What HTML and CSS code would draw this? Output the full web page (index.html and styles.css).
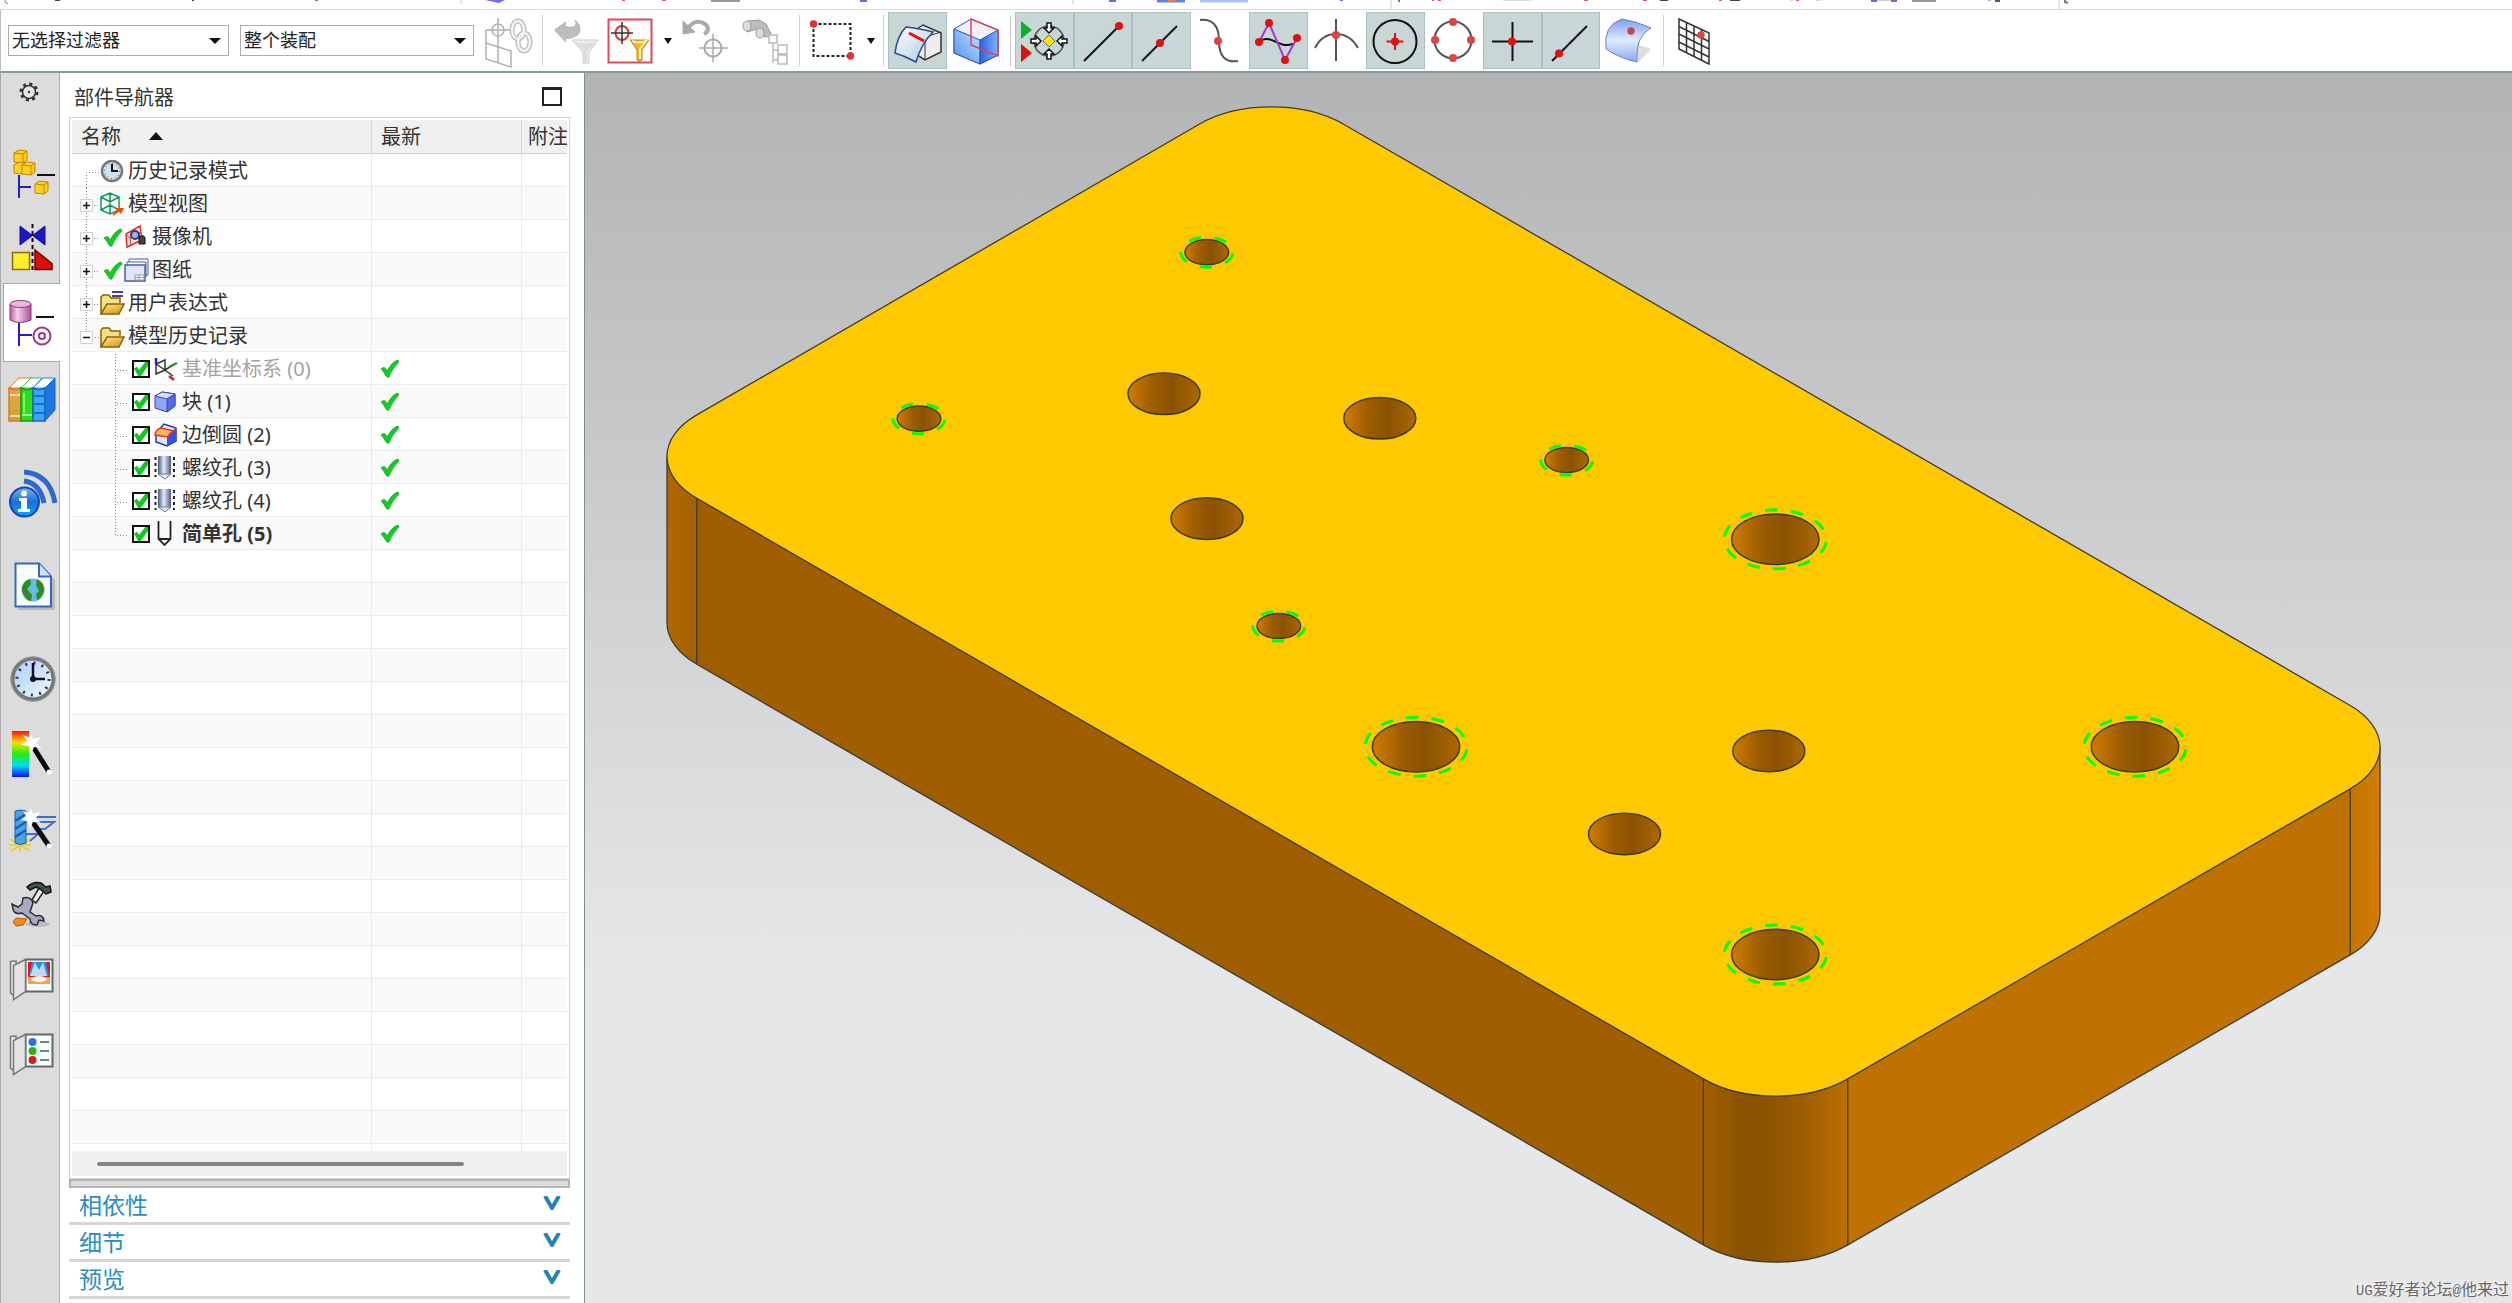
FILE: index.html
```html
<!DOCTYPE html>
<html lang="zh-CN">
<head>
<meta charset="utf-8">
<title>部件导航器</title>
<link rel="stylesheet" href="styles.css">
</head>
<body>
<div class="app">
  <div class="ribbon-edge" aria-hidden="true">
    <svg width="2512" height="9" viewBox="0 0 2512 9">
      <path d="M5 0v2l3 2" stroke="#888" fill="none"/>
      <path d="M55 0h5M192 0h2M1730 0h10M1660 0h8" stroke="#444" stroke-width="2"/>
      <path d="M315 0h3M1109 1h7M1340 0h3M860 1h7" stroke="#5b74d8" stroke-width="2"/>
      <path d="M485 0h20l-6 3z" fill="#6d6df0"/>
      <path d="M622 0h3M662 0h4M1432 0h2M1438 0h3M1584 0h4M1643 0h4M1719 0h3M1796 0h3" stroke="#e0566a" stroke-width="2"/>
      <path d="M711 1h29M1912 1h24" stroke="#999" stroke-width="2"/>
      <path d="M1157 1h28" stroke="#5f83d6" stroke-width="3"/><path d="M1168 0h7" stroke="#f08040" stroke-width="3"/>
      <path d="M1200 1h48" stroke="#a9c4f5" stroke-width="3"/>
      <path d="M1503 0h28M1790 0h3M1816 0h5" stroke="#ddd" stroke-width="2"/>
      <path d="M1871 1h6M1891 1h6" stroke="#6a6ac8" stroke-width="2"/><path d="M1877 0h14" stroke="#ccd" stroke-width="2"/>
      <path d="M1988 0h3" stroke="#d08be8" stroke-width="2"/><path d="M1995 1h5" stroke="#555" stroke-width="2"/>
      <path d="M1399 0v2M2065 0v2l3 1" stroke="#777" fill="none" stroke-width="2"/>
      <path d="M461 0v4M1073 0v4M1391 0v9M2059 0v9" stroke="#ccc"/>
    </svg>
  </div>

  <header class="toolbar">
    <div class="filters">
      <label class="combo combo-type"><select aria-label="类型过滤器"><option>无选择过滤器</option></select></label>
      <label class="combo combo-scope"><select aria-label="选择范围"><option>整个装配</option></select></label>
    </div>
    <button class="tool" aria-label="部件间链接"><svg viewBox="0 0 48 48" fill="none" stroke="#b0b0b0" stroke-width="1.5"><path d="M1 13v29l25 8V34L1 26M13 1v44M1 13h24"/><circle cx="13" cy="13" r="6"/><g stroke="#bbb" stroke-width="5"><ellipse cx="33" cy="13" rx="6" ry="9"/><ellipse cx="39" cy="25" rx="6" ry="9"/></g><g stroke="#f4f4f4" stroke-width="2.5"><ellipse cx="33" cy="13" rx="6" ry="9"/><ellipse cx="39" cy="25" rx="6" ry="9"/></g></svg></button>
    <span class="sep"></span>
    <div class="select-tools">
      <button class="tool" aria-label="重置过滤器"><svg viewBox="0 0 48 48"><path d="M2 13 14 4v5c8 2 12 0 8-7 9 5 9 17-2 19-2 1-4 1-6 1v4z" fill="#bcbcbc"/><path d="M20 23h26L37 35v11q-4 2-6 0V35z" fill="#eee" stroke="#ccc"/><path d="M22 25q11 3 22 0l-9 9v11l-3 1V34z" fill="#ddd"/></svg></button>
      <button class="tool" aria-label="常规选择过滤器"><svg viewBox="0 0 48 48"><path d="M2.500 2.500h43v43h-43z" fill="#fff" stroke="#d94b56" stroke-width="2"/><ellipse cx="16" cy="16" rx="6.500" ry="7" fill="none" stroke="#d33" stroke-width="2"/><path d="M16 5v22M5 16h22" stroke="#333" stroke-width="1.500"/><path d="M24 23h19L36 33v10q-3 2-5 0V33z" fill="#edb52c" stroke="#b98a20"/><path d="M26 24q7 3 14 0l-6 8v10" fill="none" stroke="#fff0a0" stroke-width="2"/></svg></button>
      <button class="drop" aria-label="更多过滤器"><svg viewBox="0 0 16 16"><path d="M4 5h8l-4 6z" fill="#111"/></svg></button>
      <button class="tool" aria-label="恢复选择"><svg viewBox="0 0 48 48" fill="none" stroke="#aaa"><path d="M6 11q8-10 17-4c5 4 3 8-1 10" stroke-width="4"/><path d="M1 4v13l12-2z" fill="#aaa"/><circle cx="31" cy="31" r="8.500" stroke-width="2"/><path d="M31 17v28M17 31h29" stroke-width="1.500"/></svg></button>
      <button class="tool tool-wide" aria-label="在导航器中查找"><svg viewBox="0 0 48 48"><g fill="#bdbdbd" stroke="#999"><path d="M6 4 17 3l7 4 6 12-8 1-7-8-10 3z"/><ellipse cx="5" cy="9" rx="4" ry="5" fill="#ddd"/><ellipse cx="18" cy="16" rx="4" ry="5" fill="#ddd"/></g><g fill="#fff" stroke="#bbb" stroke-width="1.500"><path d="M31 26v20M31 33h6M31 43h6" fill="none"/><path d="M27 18h8v8h-8zM36 28h9v9h-9zM36 38h9v9h-9z"/></g></svg></button>
    </div>
    <span class="sep sep-tight"></span>
    <button class="tool tool-wide" aria-label="矩形选择"><svg viewBox="0 0 48 48"><path d="M3.500 7h37v32h-37z" fill="none" stroke="#222" stroke-width="2" stroke-dasharray="3 2"/><circle cx="3.500" cy="7" r="3.700" fill="#d33"/><circle cx="40.500" cy="39" r="3.700" fill="#d33"/></svg></button>
    <button class="drop" aria-label="选择方式"><svg viewBox="0 0 16 16"><path d="M4 5h8l-4 6z" fill="#111"/></svg></button>
    <span class="sep sep-tight"></span>
    <button class="tool tool-wide on" aria-label="高亮显示"><svg viewBox="0 0 48 48"><path d="M17 16 29 8l18 8v19L31 43 20 36z" fill="#eee" stroke="#333" stroke-width="1.500"/><path d="m31 20 16-5M31 20v22" stroke="#333"/><path d="M12 10q16 2 27 5-12 12-17 30Q11 39 1 36 3 19 12 10z" fill="url(#sheet)" stroke="#2b45a0" stroke-width="1.500"/><path d="m15 16 15 8" stroke="#f00b0b" stroke-width="3"/></svg></button>
    <button class="tool tool-wide" aria-label="着色显示"><svg viewBox="0 0 48 48"><path d="M1 12 18 2l27 11v25L27 47 1 36z" fill="#f1f1f3" stroke="#3350c0"/><path d="m1 12 26 11v24L1 36z" fill="url(#blueFace)" stroke="#3350c0"/><path d="m27 23 18-10v25l-18 9z" fill="url(#blueSide)" stroke="#3350c0"/><path d="M18 2v26l27 11V13z" fill="none" stroke="#e04060" stroke-width="1.500"/></svg></button>
    <span class="sep sep-tight"></span>
    <div class="snaps">
      <button class="tool on" aria-label="启用捕捉点"><svg viewBox="0 0 48 48"><path d="M1 4v18l11-9z" fill="#0db02c"/><path d="M1 27v18l11-9z" fill="#d11"/><circle cx="29" cy="24" r="15" fill="none" stroke="#555" stroke-width="1.500"/><path d="m29 18 6 6-6 6-6-6z" fill="#ffe900" stroke="#666"/><g fill="#fff" stroke="#111" stroke-width="1.500"><path id="arr" d="M27 6h4v5h3l-5 5-5-5h3z"/><use href="#arr" transform="rotate(90 29 24)"/><use href="#arr" transform="rotate(180 29 24)"/><use href="#arr" transform="rotate(270 29 24)"/></g></svg></button>
      <button class="tool on" aria-label="端点"><svg viewBox="0 0 48 48"><path d="M5 44 40 9" stroke="#111" stroke-width="2"/><circle cx="40" cy="9" r="4" fill="#d11"/></svg></button>
      <button class="tool on" aria-label="中点"><svg viewBox="0 0 48 48"><path d="M5 44 40 9" stroke="#111" stroke-width="2"/><circle cx="23" cy="26" r="4" fill="#d11"/></svg></button>
      <button class="tool" aria-label="控制点"><svg viewBox="0 0 48 48"><path d="M4 3q19-2 19 21t19 20" fill="none" stroke="#555" stroke-width="2"/><circle cx="22" cy="24" r="4" fill="#d44"/></svg></button>
      <button class="tool on" aria-label="定义点"><svg viewBox="0 0 48 48" fill="none"><path d="M5 24c15-7 18 8 34 3" stroke="#111" stroke-width="2"/><path d="M5 25 15 6l16 37 12-22" stroke="#a535d8" stroke-width="2"/><g fill="#d11"><circle cx="5" cy="25" r="4"/><circle cx="15" cy="6" r="4"/><circle cx="31" cy="43" r="4"/><circle cx="43" cy="21" r="4"/></g></svg></button>
      <button class="tool" aria-label="交点"><svg viewBox="0 0 48 48"><path d="M2 31q7-14 21-14t22 14M23 2v42" fill="none" stroke="#555" stroke-width="2"/><circle cx="23" cy="18" r="4" fill="#d44"/></svg></button>
      <button class="tool on" aria-label="圆弧中心"><svg viewBox="0 0 48 48"><circle cx="24" cy="24.500" r="21.500" fill="none" stroke="#111" stroke-width="2"/><path d="M24 16v17M15.500 24.500h17" stroke="#d11" stroke-width="2"/><circle cx="24" cy="24.500" r="4" fill="#d11"/></svg></button>
      <button class="tool" aria-label="象限点"><svg viewBox="0 0 48 48"><circle cx="23" cy="23" r="18.500" fill="none" stroke="#555" stroke-width="2"/><g fill="#d44"><circle cx="23" cy="5" r="4"/><circle cx="5" cy="23" r="4"/><circle cx="41" cy="23" r="4"/><circle cx="23" cy="41" r="4"/></g></svg></button>
      <button class="tool on" aria-label="现有点"><svg viewBox="0 0 48 48"><path d="M4 24.500h41M24.500 5v39" stroke="#111" stroke-width="2"/><circle cx="24" cy="24.500" r="4" fill="#d11"/></svg></button>
      <button class="tool on" aria-label="曲线上的点"><svg viewBox="0 0 48 48"><path d="M5 44 40 9" stroke="#111" stroke-width="2"/><circle cx="12" cy="36.500" r="4" fill="#d11"/></svg></button>
    </div>
    <button class="tool tool-wide" aria-label="面上的点"><svg viewBox="0 0 48 48"><path d="m29 27 16 5-13 14z" fill="#ddd"/><path d="M16 2q14 2 29 9-16 8-14 34Q13 41 0 32-3 8 16 2z" fill="url(#surf)" stroke="#6884c8"/><circle cx="25" cy="14" r="3.700" fill="#c44"/></svg></button>
    <span class="sep sep-tight"></span>
    <button class="tool tool-wide" aria-label="网格点"><svg viewBox="0 0 48 48"><path d="M5 2v30l30 15V16zM5 9.500l30 15M5 17l30 15M5 25l30 15M12.500 5v31M20 9v31M27.500 12v31" fill="none" stroke="#333" stroke-width="1.500"/><circle cx="27" cy="18" r="3.700" fill="#d44"/></svg></button>
  </header>

  <div class="workspace">
    <nav class="rail" aria-label="资源条">
      <button class="rail-gear" aria-label="资源条选项"><svg width="20" height="20" viewBox="0 0 20 20"><circle cx="10" cy="10" r="8" fill="none" stroke="#333" stroke-width="3" stroke-dasharray="3 3.280"/><circle cx="10" cy="10" r="6.500" fill="#e6e6e6" stroke="#333" stroke-width="1.500"/><circle cx="10" cy="10" r="1.200" fill="#333"/></svg></button>
      <button class="rail-btn" aria-label="装配导航器"><svg viewBox="0 0 48 48"><g fill="#ffcf24" stroke="#c28500"><path d="m6 6 5-3 8 1v9l-4 3-9-1z"/><path d="m6 18 5-3 7 1v9l-4 2-8-1z"/><path d="m14 18 5-3 8 1v9l-4 3-9-1z"/><path d="m6 6 9 1 4-3M15 7v9m-1 2 9 1 4-3m-4 3v9" fill="none"/></g><path d="m27 37 4-3 9 1v9l-4 3-9-1z" fill="#ffcf24" stroke="#c28500"/><path d="m27 37 9 1 4-3m-4 3v9" fill="none" stroke="#c28500"/><path d="M29 28h18" stroke="#111" stroke-width="2"/><path d="M11 28v23M11 40h12" stroke="#2222c0" stroke-width="2"/></svg></button>
      <button class="rail-btn" aria-label="约束导航器"><svg viewBox="0 0 48 48"><path d="M12 4v19l25-19v19z" fill="#1b16c8" stroke="#1010a0"/><path d="M24.500 2v47" stroke="#111" stroke-width="2" stroke-dasharray="4 3"/><path d="M4.500 30.500h17v17h-17z" fill="#ffec2a" stroke="#8a6d00" stroke-width="1.500"/><path d="M27 28v19.500h17v-6z" fill="#d91208" stroke="#700" stroke-width="1.500"/></svg></button>
      <button class="rail-btn rail-on" aria-label="部件导航器"><svg viewBox="0 0 48 48"><path d="M2 5v16q10 5 21 0V5" fill="url(#pink)" stroke="#8a3a78"/><ellipse cx="12.500" cy="5" rx="10.500" ry="3.500" fill="#e9b9dd" stroke="#8a3a78"/><path d="M28 18h18" stroke="#111" stroke-width="2"/><path d="M11 24v23M11 36h13" stroke="#2222c0" stroke-width="2"/><ellipse cx="34" cy="37" rx="8.500" ry="8.500" fill="#fff" stroke="#9b3a86" stroke-width="2"/><circle cx="34" cy="37" r="3" fill="#fff" stroke="#9b3a86" stroke-width="2"/></svg></button>
      <button class="rail-btn" aria-label="重用库"><svg viewBox="0 0 48 48"><path d="M1 12 11 2h13L13 12z" fill="#fff" stroke="#e07820"/><path d="M13 12 23 2h11L25 12z" fill="#fff" stroke="#4b4"/><path d="M25 12 35 2h12L37 12z" fill="#fff" stroke="#28d"/><path d="M1 12q6 3 12 0v33H1z" fill="url(#bookO)" stroke="#e07820" stroke-width="1.500"/><path d="M13 12q6 3 12 0v33H13z" fill="#32dc1c" stroke="#189a18" stroke-width="1.500"/><path d="M25 12q6 3 12 0v33H25z" fill="#3fa5f5" stroke="#1565c8" stroke-width="1.500"/><path d="M37 12 47 2v32L37 45z" fill="#1f78e0" stroke="#1565c8"/><path d="M16 17v20" stroke="#7dff60" stroke-width="2"/><path d="M2 19h10M2 40h10" stroke="#fdb" stroke-width="2"/><path d="M14 39h10" stroke="#9f9" stroke-width="2"/><path d="M26 20h10M26 28h10M26 37h10" stroke="#1560c0" stroke-width="1.500"/></svg></button>
      <button class="rail-btn rail-gap" aria-label="HD3D 工具"><svg viewBox="0 0 48 48"><path d="M16 12q16 2 20 22M16 3q26 2 31 31" fill="none" stroke="#3068d0" stroke-width="5"/><circle cx="16.500" cy="33" r="14.500" fill="url(#info)" stroke="#1547a8" stroke-width="2"/><circle cx="16" cy="24.500" r="3" fill="#fff"/><path d="M11 29h8v11h3v3H10v-3h3v-8h-2z" fill="#fff"/></svg></button>
      <button class="rail-btn rail-gap" aria-label="Web 浏览器"><svg viewBox="0 0 48 48"><path d="M10 4h24l13 14v30H10z" fill="#999" opacity=".5"/><path d="M7.500 1.500H31l12 13v30H7.500z" fill="#f8fdff" stroke="#3367c8" stroke-width="2"/><path d="M31 1.500v13h12" fill="#cfe4fb" stroke="#3367c8" stroke-width="2"/><circle cx="25" cy="28" r="11.500" fill="#67b8e8"/><path d="M22 17q-8 2-8 12 4 10 9 10l1-6-5-6 4-5zM29 17q8 4 7 12-3 8-7 9l-1-6 3-3-3-6z" fill="#2f8a1c"/></svg></button>
      <button class="rail-btn rail-gap" aria-label="历史记录"><svg viewBox="0 0 48 48"><circle cx="25" cy="24" r="20.500" fill="url(#dial)" stroke="#777" stroke-width="4"/><circle cx="25" cy="24" r="22" fill="none" stroke="#999"/><circle cx="25" cy="24" r="16" fill="none" stroke="#334" stroke-width="3" stroke-dasharray="2 6.380"/><path d="M25 8v16h12" fill="none" stroke="#112" stroke-width="2.500"/><circle cx="25" cy="24" r="3" fill="#112"/></svg></button>
      <button class="rail-btn" aria-label="可视化"><svg viewBox="0 0 48 48"><path d="M4 1h17v46H4z" fill="url(#rainbow)"/><path d="m24 15 17 27" stroke="#0a0a0a" stroke-width="5"/><circle cx="41" cy="42" r="2.500" fill="#fff"/><path d="m23 2 2 7 8-2-5 6 6 5-8-1-3 7-2-8-8-1 6-4-4-6 7 3z" fill="#fff"/></svg></button>
      <button class="rail-btn" aria-label="加工向导"><svg viewBox="0 0 48 48"><path d="M26 12h22M26 17h20l-9 7H26M10 29h20l-8 7" stroke="#3a70c8" stroke-width="2" fill="none"/><path d="M2 34 22 46M22 34 3 46M12 33v14M1 40h22" stroke="#f2cf2a" stroke-width="2"/><path d="M7 6q5-2 11 0v32q-6 3-11 0z" fill="#49a4ec" stroke="#1b5fae"/><path d="m7 16 11-7M7 24l11-7M7 32l11-7" stroke="#1b5fae" stroke-width="2.500"/><path d="m24 16 17 25" stroke="#0a0a0a" stroke-width="5"/><circle cx="41" cy="41" r="2.500" fill="#fff"/><path d="m23 3 2 6 7-2-4 6 5 5-8-1-3 6-2-7-7-1 5-4-3-5 6 2z" fill="#fff"/></svg></button>
      <button class="rail-btn" aria-label="工具"><svg viewBox="0 0 48 48"><ellipse cx="30" cy="44" rx="12" ry="3" fill="#bbb"/><path d="m8 38-3 4 3 4 7-1 4-6z" fill="#f58a1c" stroke="#b85a00"/><path d="m24 20 7-12 5 3-8 12z" fill="#eee" stroke="#222" stroke-width="1.500"/><path d="M19 7q6-6 14-4l5 4 4-1 1 6-5 2-6-5-4-2-6 3z" fill="#3b5548" stroke="#111" stroke-width="1.500"/><path d="M15 18q8-2 10 5l-3 9 6 4q7-2 8 5l-5-1-2 5q-7 0-7-6l-8-6q-8 2-9-4l-1-5 6 3 4-3z" fill="#a9a9c2" stroke="#2b2b3a" stroke-width="1.500"/></svg></button>
      <button class="rail-btn" aria-label="系统场景"><svg viewBox="0 0 48 48"><g id="doors"><path d="M17.500 4.500h27v32h-27z" fill="#f2ffff" stroke="#666" stroke-width="2"/><path d="M2.500 6.500 8 6v36l-5.500-4z" fill="#eee" stroke="#777" stroke-width="1.500"/><path d="m17.500 4.500-12 6v34l12-8z" fill="#e4e4e4" stroke="#777" stroke-width="1.500"/></g><path d="M20 7h22v16H20z" fill="#e01515"/><path d="M24 7h14l3 14H21z" fill="#2b8ae8"/><path d="m27 7 4 8 4-8 4 14H22z" fill="#b9dcf8"/><path d="M20 22h22v7H20z" fill="#f0a44c"/><ellipse cx="31" cy="24" rx="8" ry="3" fill="#fff3e0"/></svg></button>
      <button class="rail-btn" aria-label="角色"><svg viewBox="0 0 48 48"><use href="#doors"/><circle cx="24.500" cy="12" r="4" fill="#2b70e4"/><circle cx="24.500" cy="21" r="4" fill="#2bb51c"/><circle cx="24.500" cy="30" r="4" fill="#d81c1c"/><path d="M32 12h9M32 21h9M32 30h9" stroke="#555" stroke-width="1.500"/></svg></button>
    </nav>

    <aside class="navigator">
      <div class="nav-title">
        <h1>部件导航器</h1>
        <button class="maximize" aria-label="最大化"></button>
      </div>
      <div class="tree-box">
        <div class="tree-view">
          <table class="tree">
            <thead><tr><th class="col-name">名称<span class="sort"></span></th><th class="col-state">最新</th><th class="col-note">附注</th></tr></thead>
            <tbody>
              <tr><td><div class="node"><svg class="branch" viewBox="0 0 28 33"><path d="M14.500 33V17.500H28" class="dots"/></svg><svg class="ico" viewBox="0 0 24 24"><circle cx="12" cy="12" r="10" fill="#cfe4f2" stroke="#777" stroke-width="2.500"/><circle cx="12" cy="12" r="7.500" fill="none" stroke="#345" stroke-dasharray="1 2.930"/><path d="M12 5v7h6" fill="none" stroke="#111" stroke-width="2"/></svg><span class="label">历史记录模式</span></div></td><td></td><td></td></tr>
              <tr><td><div class="node"><button class="branch" aria-label="展开"><svg viewBox="0 0 28 33"><use href="#plus"/></svg></button><svg class="ico" viewBox="0 0 24 24"><path d="m1 5 9-4 9 4v13l-9 4-9-4zM1 5l9 5 9-5M10 1v21M1 18l9-5 9 5" fill="none" stroke="#12985a" stroke-width="1.500"/><path d="m13 23 7-5" stroke="#f04a18" stroke-width="2"/><path d="m15 16 9 0-3 6z" fill="#f04a18"/></svg><span class="label">模型视图</span></div></td><td></td><td></td></tr>
              <tr><td><div class="node"><button class="branch" aria-label="展开"><svg viewBox="0 0 28 33"><use href="#plus"/></svg></button><svg class="ico" viewBox="0 0 24 24"><use href="#tick" x="4" y="4"/></svg><svg class="ico" viewBox="0 0 24 24"><path d="M2 9 16 1l2 14-15 7z" fill="#fbe4e0" stroke="#e0301c" stroke-width="1.500"/><path d="M2 9l4 4 1 8M6 13l11-6" fill="none" stroke="#e0301c"/><circle cx="11" cy="10" r="4" fill="#aab0dc" stroke="#2a3a90" stroke-width="2"/><path d="M15 12q5-3 6 1v6h-6z" fill="#444" stroke="#111"/></svg><span class="label">摄像机</span></div></td><td></td><td></td></tr>
              <tr><td><div class="node"><button class="branch" aria-label="展开"><svg viewBox="0 0 28 33"><use href="#plus"/></svg></button><svg class="ico" viewBox="0 0 24 24"><use href="#tick" x="4" y="4"/></svg><svg class="ico" viewBox="0 0 24 24"><path d="M5 1h19v16H5z" fill="#fff" stroke="#4a5e9a"/><path d="M3 4h19v15H3z" fill="#fff" stroke="#4a5e9a"/><path d="M1 7h20v16H1z" fill="#dfe6fb" stroke="#4a5e9a" stroke-width="1.500"/><path d="M11 17h9v5h-9zM11 19.500h9M15 17v5" fill="#fff" stroke="#99a"/></svg><span class="label">图纸</span></div></td><td></td><td></td></tr>
              <tr><td><div class="node"><button class="branch" aria-label="展开"><svg viewBox="0 0 28 33"><use href="#plus"/></svg></button><svg class="ico" viewBox="0 0 24 24"><use href="#folder"/><path d="M12 1h11M12 5h11" stroke="#4a3f9a" stroke-width="2"/></svg><span class="label">用户表达式</span></div></td><td></td><td></td></tr>
              <tr><td><div class="node"><button class="branch" aria-label="折叠"><svg viewBox="0 0 28 33"><path d="M14.500 0v11M20 17.500h8" class="dots"/><path d="M8.500 11.500h12v12h-12z" class="box"/><path d="M11 17.500h7" class="sign"/></svg></button><svg class="ico" viewBox="0 0 24 24"><use href="#folder"/></svg><span class="label">模型历史记录</span></div></td><td></td><td></td></tr>
              <tr><td><div class="node"><svg class="branch2" viewBox="0 0 60 33"><use href="#twig"/></svg><input type="checkbox" id="f0" checked><svg class="ico" viewBox="0 0 24 24"><path d="M2 7v10l9-4V3zM2 7l9 6 8 6M2 17l9-4 8-5" fill="none" stroke="#333" stroke-width="1.500"/><path d="M2 7V1" stroke="#2222d0" stroke-width="2.500"/><path d="m15 10 8-4" stroke="#1a9a2a" stroke-width="2.500"/><path d="m15 19 5 4" stroke="#d02020" stroke-width="2.500"/></svg><label class="label muted" for="f0">基准坐标系 (0)</label></div></td><td class="state"><svg class="tick" viewBox="0 0 18 18"><use href="#tick"/></svg></td><td></td></tr>
              <tr><td><div class="node"><svg class="branch2" viewBox="0 0 60 33"><use href="#twig"/></svg><input type="checkbox" id="f1" checked><svg class="ico" viewBox="0 0 24 24"><path d="m1 6 7-4 13 2v12l-8 6-12-4z" fill="#93a4f6" stroke="#3a4ab0"/><path d="m1 6 7-4 13 2-8 5z" fill="#d5dcfd" stroke="#3a4ab0"/><path d="m13 9 8-5v12l-8 6z" fill="#5468e8" stroke="#3a4ab0"/></svg><label class="label" for="f1">块 (1)</label></div></td><td class="state"><svg class="tick" viewBox="0 0 18 18"><use href="#tick"/></svg></td><td></td></tr>
              <tr><td><div class="node"><svg class="branch2" viewBox="0 0 60 33"><use href="#twig"/></svg><input type="checkbox" id="f2" checked><svg class="ico" viewBox="0 0 24 24"><path d="m2 10 8-9 12 4v13l-9 5-11-4z" fill="#dfe5ff" stroke="#2438a8" stroke-width="1.500"/><path d="m13 12 9-7v13l-9 5z" fill="#3454e0"/><path d="M1 12q1-6 6-7l13 3q-5 2-6 6z" fill="#ffb46a" stroke="#e03a18" stroke-width="1.500"/></svg><label class="label" for="f2">边倒圆 (2)</label></div></td><td class="state"><svg class="tick" viewBox="0 0 18 18"><use href="#tick"/></svg></td><td></td></tr>
              <tr><td><div class="node"><svg class="branch2" viewBox="0 0 60 33"><use href="#twig"/></svg><input type="checkbox" id="f3" checked><svg class="ico" viewBox="0 0 24 24"><use href="#thread"/></svg><label class="label" for="f3">螺纹孔 (3)</label></div></td><td class="state"><svg class="tick" viewBox="0 0 18 18"><use href="#tick"/></svg></td><td></td></tr>
              <tr><td><div class="node"><svg class="branch2" viewBox="0 0 60 33"><use href="#twig"/></svg><input type="checkbox" id="f4" checked><svg class="ico" viewBox="0 0 24 24"><use href="#thread"/></svg><label class="label" for="f4">螺纹孔 (4)</label></div></td><td class="state"><svg class="tick" viewBox="0 0 18 18"><use href="#tick"/></svg></td><td></td></tr>
              <tr><td><div class="node"><svg class="branch2" viewBox="0 0 60 33"><path d="M43.500 1v16.500H56" class="dots"/></svg><input type="checkbox" id="f5" checked><svg class="ico" viewBox="0 0 24 24"><path d="M4.500-1v18l6 6 6-6V-1M4.500 17h12" fill="none" stroke="#222" stroke-width="1.800"/></svg><label class="label strong" for="f5">简单孔 (5)</label></div></td><td class="state"><svg class="tick" viewBox="0 0 18 18"><use href="#tick"/></svg></td><td></td></tr>
            </tbody>
          </table>
          <div class="blank-rows"></div>
        </div>
        <div class="hscroll"><div class="thumb"></div></div>
      </div>
      <div class="splitter"></div>
      <div class="sections">
        <button class="section">相依性<svg viewBox="0 0 18 14"><path d="m2 0 7 12 7-12" class="chev"/></svg></button>
        <button class="section">细节<svg viewBox="0 0 18 14"><path d="m2 0 7 12 7-12" class="chev"/></svg></button>
        <button class="section">预览<svg viewBox="0 0 18 14"><path d="m2 0 7 12 7-12" class="chev"/></svg></button>
      </div>
    </aside>

    <main class="viewport">
      <svg class="scene" viewBox="585 73 1927 1230" role="img" aria-label="零件模型">
        <defs>
          <linearGradient id="sides" gradientUnits="userSpaceOnUse" x1="667" y1="0" x2="2380" y2="0">
            <stop offset="0" stop-color="#b16900"/><stop offset=".0174" stop-color="#a46000"/><stop offset=".0174" stop-color="#a15e00"/>
            <stop offset=".605" stop-color="#a15e00"/><stop offset=".605" stop-color="#a26000"/><stop offset=".629" stop-color="#895200"/><stop offset=".64" stop-color="#8a5300"/><stop offset=".66" stop-color="#985b00"/><stop offset=".6893" stop-color="#bd7100"/>
            <stop offset=".6893" stop-color="#c07200"/><stop offset=".9826" stop-color="#c07200"/><stop offset=".9826" stop-color="#c37400"/><stop offset="1" stop-color="#d37d00"/>
          </linearGradient>
          <linearGradient id="bore"><stop offset="0" stop-color="#d27c00"/><stop offset=".35" stop-color="#9b5c00"/><stop offset=".6" stop-color="#8a5200"/><stop offset=".8" stop-color="#9a5c00"/><stop offset="1" stop-color="#b06900"/></linearGradient>
          <linearGradient id="sheet" x1="0" y1="0" x2="1" y2="1"><stop offset="0" stop-color="#fff"/><stop offset="1" stop-color="#a9c9e4"/></linearGradient>
          <linearGradient id="blueFace" x1="1" y1="0" x2="0" y2="1"><stop offset="0" stop-color="#bfe3ff"/><stop offset="1" stop-color="#4d8fe8"/></linearGradient>
          <linearGradient id="blueSide"><stop offset="0" stop-color="#2a62e0"/><stop offset="1" stop-color="#7db4f8"/></linearGradient>
          <linearGradient id="surf" x1="0" y1="0" x2="0" y2="1"><stop offset="0" stop-color="#7d9ff0"/><stop offset=".5" stop-color="#e2ecff"/><stop offset="1" stop-color="#86a6f2"/></linearGradient>
          <linearGradient id="pink"><stop offset="0" stop-color="#b95aa2"/><stop offset=".35" stop-color="#f3d0ea"/><stop offset="1" stop-color="#b04c98"/></linearGradient>
          <linearGradient id="bookO" x1="0" y1="0" x2="0" y2="1"><stop offset="0" stop-color="#f0a050"/><stop offset="1" stop-color="#c8a82c"/></linearGradient>
          <linearGradient id="info" x1="0" y1="0" x2="0" y2="1"><stop offset="0" stop-color="#7ab4f4"/><stop offset=".5" stop-color="#1670dc"/><stop offset="1" stop-color="#16a2f8"/></linearGradient>
          <linearGradient id="dial" x1="0" y1="0" x2="1" y2="1"><stop offset="0" stop-color="#a9cdfb"/><stop offset="1" stop-color="#f2f8ff"/></linearGradient>
          <linearGradient id="rainbow" x1="0" y1="0" x2="0" y2="1"><stop offset="0" stop-color="#f11"/><stop offset=".25" stop-color="#fd0"/><stop offset=".5" stop-color="#2e1"/><stop offset=".75" stop-color="#0de"/><stop offset="1" stop-color="#11e"/></linearGradient>
          <linearGradient id="gold" x1="0" y1="0" x2="1" y2="1"><stop offset="0" stop-color="#fff0a0"/><stop offset="1" stop-color="#d58a00"/></linearGradient>
          <linearGradient id="drill"><stop offset="0" stop-color="#46587e"/><stop offset=".45" stop-color="#e4ebf8"/><stop offset="1" stop-color="#4a5c84"/></linearGradient>
          <path id="tick" d="M0 9q4-4 6 2Q10 3 16 0q2 0 2 2Q11 9 8 17q-2 1-3-1Q3 12 0 9z" fill="#12cc26" stroke="#0a9a1c" stroke-width=".6"/>
          <g id="plus"><path d="M14.500 0v11M14.500 25v8M22 17.500h6" class="dots"/><path d="M8.500 11.500h12v12h-12z" class="box"/><path d="M11 17.500h7M14.500 14v7" class="sign"/></g>
          <path id="twig" d="M43.500 1v31M45 17.500h12" class="dots"/>
          <g id="folder"><path d="M1 23V6l2-2h6l2 3h9v5" fill="#f8e08a" stroke="#8a6200" stroke-width="1.500"/><path d="m1 23 6-10h17l-5 10z" fill="url(#gold)" stroke="#8a6200" stroke-width="1.500"/></g>
          <g id="thread"><path d="M4 0v18l7 5 6-5V0z" fill="url(#drill)"/><path d="m4 18 7 5 6-5z" fill="#e6edf4" stroke="#6a7a90"/><path d="M1.500 1v20M20 1v20" stroke="#222" stroke-width="2" stroke-dasharray="3 3"/></g>
          <g id="small"><ellipse rx="21.800" ry="12.600" class="hole"/><ellipse rx="26" ry="15" pathLength="100" class="cosmetic" stroke-dasharray="9.500 10.500"/></g>
          <ellipse id="medium" rx="36" ry="20.800" class="hole"/>
          <g id="large"><ellipse rx="43.700" ry="25.300" class="hole"/><ellipse rx="51" ry="29.500" pathLength="100" class="cosmetic" stroke-dasharray="5 5"/></g>
        </defs>
        <path class="edge" fill="url(#sides)" d="M667 456.600V622.600A102.100 59 0 0 0 696.800 664.300L1703.400 1244.900A102.100 59 0 0 0 1847.800 1244.900L2350.200 954.900A102.100 59 0 0 0 2380 913.200V747.200z"/>
        <path class="edge" d="M696.800 498V664M1703.400 1079V1245M1847.800 1079V1245M2350.200 789V955"/>
        <path class="edge" fill="#fec900" d="M696.800 414.900 1199.200 124.200A102.100 59 0 0 1 1343.600 124.200L2350.200 705.500A102.100 59 0 0 1 2350.200 788.900L1847.800 1078.900A102.100 59 0 0 1 1703.400 1078.900L696.800 498.300A102.100 59 0 0 1 696.800 414.900z"/>
        <use href="#small" x="1206.800" y="252.200"/><use href="#small" x="919" y="418.700"/><use href="#small" x="1278.800" y="626"/><use href="#small" x="1566.700" y="460"/>
        <use href="#medium" x="1164" y="393.800"/><use href="#medium" x="1379.800" y="418.300"/><use href="#medium" x="1207" y="518.600"/><use href="#medium" x="1768.800" y="751"/><use href="#medium" x="1624.500" y="834"/>
        <use href="#large" x="1775.300" y="539.300"/><use href="#large" x="1416" y="746.700"/><use href="#large" x="1775.300" y="954.500"/><use href="#large" x="2135" y="746.700"/>
      </svg>
      <p class="watermark"><span class="latin">UG</span>爱好者论坛<span class="latin">@</span>他来过</p>
    </main>
  </div>
</div>
</body>
</html>
```
FILE: styles.css
```css
* { box-sizing: border-box; }

body {
  margin: 0;
  font-family: "Noto Sans", "Noto Sans CJK SC", sans-serif;
  font-size: 20px;
  color: #333;
  background: #fff;
}

button {
  margin: 0;
  padding: 0;
  border: 0;
  background: none;
  font: inherit;
  color: inherit;
}

svg { display: block; }

.app {
  display: flex;
  flex-direction: column;
  height: 100vh;
  overflow: hidden;
}

.ribbon-edge {
  flex: none;
  height: 10px;
  overflow: hidden;
  border-bottom: 1px solid #dcdcdc;
}

/* Selection toolbar */
.toolbar {
  flex: none;
  display: flex;
  align-items: center;
  height: 63px;
  border-bottom: 2px solid #859a9b;
  border-left: 1px solid #bbb;
}

.filters {
  display: flex;
  gap: 11px;
  margin: 0 11px 0 7px;
}

.combo {
  display: grid;
  align-items: center;
}
.combo-type { width: 221px; }
.combo-scope { width: 234px; }
.combo select {
  grid-area: 1 / 1;
  appearance: none;
  width: 100%;
  height: 31px;
  padding: 0 3px;
  border: 1px solid #adadad;
  border-radius: 0;
  background: #fff;
  font-family: inherit;
  font-size: 18px;
  line-height: 29px;
  color: #222;
}
.combo::after {
  content: "";
  grid-area: 1 / 1;
  justify-self: end;
  margin-right: 8px;
  border: 6px solid transparent;
  border-top-color: #111;
  border-bottom: 0;
  pointer-events: none;
}

.select-tools {
  display: flex;
  align-items: center;
  gap: 6px;
}

.tool {
  display: flex;
  flex: none;
  align-items: center;
  justify-content: center;
  width: 48px;
  height: 57px;
}
.tool svg { width: 48px; height: 48px; overflow: visible; }
.tool-wide { width: 59px; }
.on {
  background: #c8d7d5;
  border: 1px solid #a7c3bf;
}

.drop svg { width: 16px; height: 16px; }

.sep {
  flex: none;
  width: 1px;
  height: 51px;
  margin: 0 9px;
  background: #d0d0d0;
}
.sep-tight { margin: 0 4px; }

.snaps {
  display: grid;
  grid-template-columns: repeat(10, 1fr);
  width: 585px;
}
.snaps .tool { width: auto; }

.workspace {
  flex: 1;
  display: flex;
  min-height: 0;
}

/* Resource bar */
.rail {
  flex: none;
  width: 60px;
  background: #dcdcdc;
  border-left: 1px solid #aaa;
  border-right: 1px solid #aaa;
}
.rail button {
  display: flex;
  width: 58px;
}
.rail-gear {
  height: 60px;
  padding: 9px 0 0 18px;
}
.rail-btn {
  align-items: center;
  height: 75px;
  padding-left: 7px;
}
.rail-btn svg { width: 48px; height: 48px; overflow: visible; }
.rail-gap { margin-top: 18px; }
.rail .rail-on {
  width: 57px;
  height: 79px;
  margin-left: 2px;
  padding-left: 4px;
  border: 1px solid #aaa;
  border-right: 0;
  background: #fff;
}

/* Part navigator */
.navigator {
  flex: none;
  display: flex;
  flex-direction: column;
  width: 525px;
  padding: 0 14px 0 9px;
  border-right: 1px solid #7e8f92;
  background: #fff;
}

.nav-title {
  display: flex;
  align-items: center;
  justify-content: space-between;
  height: 44px;
  padding: 3px 8px 0 5px;
}
.nav-title h1 {
  margin: 0;
  font-size: 20px;
  font-weight: 400;
}
.maximize {
  width: 20px;
  height: 19px;
  border: 2px solid #222;
  border-top-width: 3px;
}

.tree-box {
  flex: 1;
  display: flex;
  flex-direction: column;
  min-height: 0;
  padding: 2px;
  border: 1px solid #d4d4d4;
}
.tree-view {
  flex: 1;
  display: flex;
  flex-direction: column;
  min-height: 0;
  overflow: hidden;
}

.tree {
  width: 100%;
  table-layout: fixed;
  border-collapse: separate;
  border-spacing: 0;
}
.tree th {
  height: 34px;
  padding: 1px 0 0 9px;
  border-bottom: 1px solid #d0d0d0;
  border-right: 1px solid #d8d8d8;
  background: #f0f0f0;
  font-weight: 400;
  line-height: 32px;
  text-align: left;
  white-space: nowrap;
}
.tree th:last-child, .tree td:last-child { border-right: 0; }
.tree .col-name { width: 300px; }
.tree .col-state { width: 150px; }
.tree .col-note { padding-left: 6px; }
.sort {
  display: inline-block;
  margin-left: 28px;
  vertical-align: 4px;
  border: 7px solid transparent;
  border-bottom: 8px solid #111;
  border-top: 0;
}
.tree td {
  height: 33px;
  padding: 0;
  border-bottom: 1px solid #ebebeb;
  border-right: 1px solid #ebebeb;
}
.tree tbody tr:nth-child(even) td { background: #fafafa; }
.tree .state { padding: 2px 0 0 9px; }

.node {
  display: flex;
  align-items: center;
  height: 32px;
  padding-top: 2px;
}
.branch { flex: none; width: 28px; height: 33px; }
.branch2 { flex: none; width: 60px; height: 33px; }
.dots { fill: none; stroke: #888; stroke-width: 1; stroke-dasharray: 1 2; }
.box { fill: #fff; stroke: #d0d0d0; }
.sign { stroke: #111; stroke-width: 1.5; }
.ico { flex: none; width: 24px; height: 24px; overflow: visible; }
.tick { width: 18px; height: 18px; }
.label {
  margin-left: 4px;
  line-height: 32px;
  white-space: nowrap;
}
.muted { color: #a3a3a3; }
.strong { font-weight: 700; }

.node input {
  appearance: none;
  flex: none;
  display: grid;
  place-items: center;
  width: 18px;
  height: 18px;
  margin: 0 4px 0 0;
  border: 2px solid #111;
  background: #fff;
}
.node input:checked::before {
  content: "";
  width: 14px;
  height: 14px;
  background: #10c822;
  clip-path: polygon(0 48%, 20% 34%, 38% 56%, 80% 0, 100% 0, 100% 28%, 48% 100%, 30% 100%);
}

/* Unused part of the list keeps the row banding and column rules */
.blank-rows {
  flex: 1;
  background:
    linear-gradient(#ebebeb, #ebebeb) 299px 0 / 1px 100% no-repeat,
    linear-gradient(#ebebeb, #ebebeb) 449px 0 / 1px 100% no-repeat,
    repeating-linear-gradient(#fff 0 32px, #ebebeb 32px 33px, #fafafa 33px 65px, #ebebeb 65px 66px);
}

.hscroll {
  flex: none;
  height: 25px;
  padding: 11px 103px 0 25px;
  background: #f0f0f0;
}
.thumb {
  height: 4px;
  border-radius: 2px;
  background: #858585;
}

.splitter {
  flex: none;
  height: 9px;
  border: 2px solid #b4b4b4;
  background: #dadada;
}

.sections { flex: none; padding-bottom: 4px; }
.section {
  display: flex;
  align-items: center;
  justify-content: space-between;
  width: 100%;
  height: 37px;
  padding: 0 9px 0 10px;
  border-bottom: 3px solid #d6d6d6;
  font-size: 23px;
  line-height: 34px;
  color: #2b8dbf;
}
.section svg { width: 18px; height: 14px; margin-bottom: 5px; }
.chev { fill: none; stroke: #2583b5; stroke-width: 4; }

/* Graphics window */
.viewport {
  flex: 1;
  position: relative;
  min-width: 0;
  background: linear-gradient(#b2b3b5, #e6e7e9 73%);
}
.scene { width: 100%; height: 100%; }
.edge { stroke: #3c3c38; stroke-width: 1.3; }
.hole { fill: url(#bore); stroke: #3c3c38; stroke-width: 1.5; }
.cosmetic { fill: none; stroke: #0f0; stroke-width: 3; stroke-dashoffset: -1; }

.watermark {
  position: absolute;
  right: 3px;
  bottom: 2px;
  margin: 0;
  font-size: 16px;
  line-height: 20px;
  color: #666;
  text-shadow: -1px -1px 0 #fff;
}
.latin {
  font-family: "Liberation Mono", monospace;
  font-size: 14px;
}
```
